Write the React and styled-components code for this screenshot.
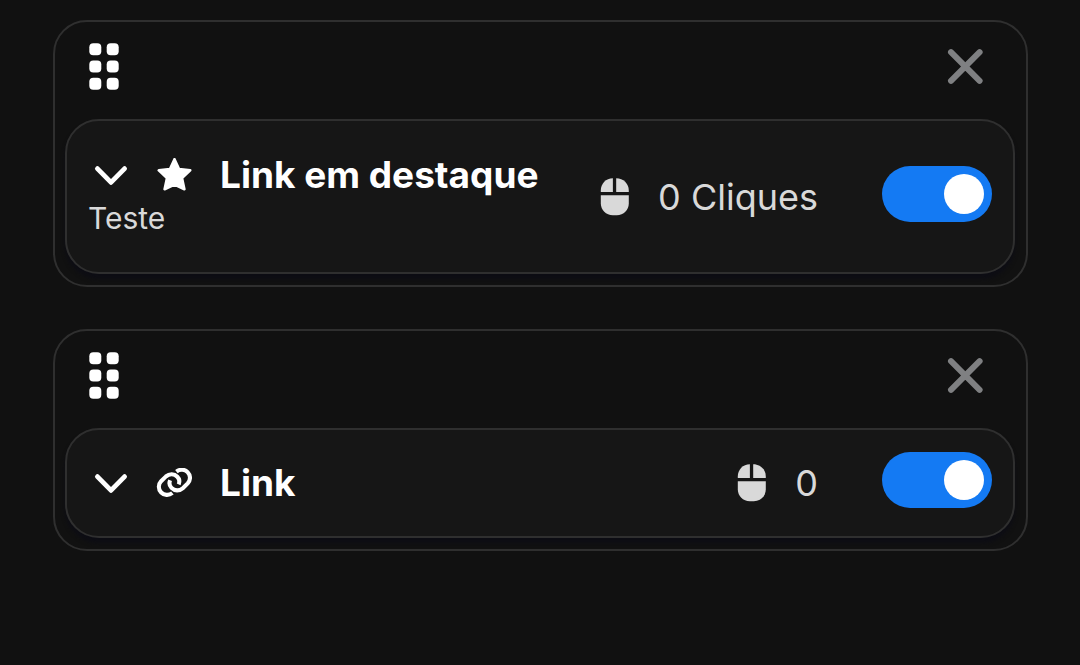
import { useState } from 'react'
import styled, { createGlobalStyle } from 'styled-components'

const GlobalStyle = createGlobalStyle`
  *,
  *::before,
  *::after {
    box-sizing: border-box;
  }

  body {
    margin: 0;
    background-color: #111111;
    color: #ffffff;
    font-family: Inter, 'Liberation Sans', sans-serif;
  }

  button {
    padding: 0;
    border: none;
    background: none;
    color: inherit;
    font: inherit;
    cursor: pointer;
  }
`

const List = styled.main`
  display: flex;
  flex-direction: column;
  gap: 42px;
  padding: 20px 52px 20px 53px;
`

const Card = styled.article`
  padding: 0 11px 11px 10px;
  border: 2px solid #2f2f2f;
  border-radius: 34px;
`

const CardHeader = styled.header`
  height: 97px;
  padding: 0 32px 8px 24px;
  display: flex;
  justify-content: space-between;
  align-items: center;
`

const IconButton = styled.button`
  display: flex;
  color: ${(props) => props.$color || '#ffffff'};
`

const Panel = styled.div`
  min-height: ${(props) => (props.$tall ? '155px' : '110px')};
  padding: 0 21px;
  display: flex;
  align-items: center;
  background-color: #161616;
  border: 2px solid #2f2f2f;
  border-radius: 34px;
  box-shadow: 0 5px 4px #0d0d14;
`

const Info = styled.div`
  flex: 1;
  padding-bottom: ${(props) => (props.$tall ? '2px' : '0')};
`

const TitleRow = styled.div`
  display: flex;
  align-items: center;
  padding-left: 6px;
`

const TypeIcon = styled.span`
  width: 36px;
  margin: 0 28px;
  display: flex;
  justify-content: center;
`

const Title = styled.h2`
  margin: 0;
  font-size: 37px;
  line-height: 44px;
  font-weight: 700;
`

const Description = styled.p`
  margin: 0;
  font-size: 30px;
  line-height: 42px;
  color: #d9d9d9;
`

const Clicks = styled.div`
  display: flex;
  align-items: center;
  gap: 28px;
  margin-right: 64px;
  font-size: 36px;
  line-height: 44px;
  color: #d9d9d9;
`

const Switch = styled.input`
  appearance: none;
  width: 110px;
  height: 56px;
  margin: 0 0 6px;
  padding: 8px;
  display: flex;
  align-items: center;
  border-radius: 28px;
  background-color: #3a3a3a;
  cursor: pointer;

  &::before {
    content: '';
    width: 40px;
    height: 40px;
    border-radius: 50%;
    background-color: #ffffff;
  }

  &:checked {
    justify-content: flex-end;
    background-color: #147af3;
  }
`

function GripIcon() {
  return (
    <svg width="30" height="47" viewBox="0 0 30 47" fill="currentColor">
      {[0.2, 17.5, 34.8].map((y) => (
        <g key={y}>
          <rect x="0.3" y={y} width="12" height="12" rx="4" />
          <rect x="17.7" y={y} width="12" height="12" rx="4" />
        </g>
      ))}
    </svg>
  )
}

function CloseIcon() {
  return (
    <svg
      width="36"
      height="36"
      viewBox="0 0 36 36"
      fill="none"
      stroke="currentColor"
      strokeWidth="6"
      strokeLinecap="round"
    >
      <path d="M4 3.2L32.6 31.8M32.6 3.2L4 31.8" />
    </svg>
  )
}

function ChevronIcon() {
  return (
    <svg
      width="34"
      height="24"
      viewBox="0 0 34 24"
      fill="none"
      stroke="currentColor"
      strokeWidth="4.8"
      strokeLinecap="round"
      strokeLinejoin="round"
    >
      <path d="M3.4 5.6L17 19.4L30.6 5.6" />
    </svg>
  )
}

function StarIcon() {
  return (
    <svg
      width="36"
      height="34"
      viewBox="0 0 36 34"
      fill="currentColor"
      stroke="currentColor"
      strokeWidth="2.6"
      strokeLinejoin="round"
    >
      <path d="M18.5 1.2L23 11L34.2 12.4L26 20L28.4 31.2L18.5 26.6L8.6 31.2L11 20L2.8 12.4L14 11Z" />
    </svg>
  )
}

function LinkIcon() {
  return (
    <svg
      width="36"
      height="30"
      viewBox="0 0 36 30"
      fill="none"
      stroke="currentColor"
      strokeWidth="4.1"
    >
      <path d="M16.4 25C12.8 27.8 8 27.4 5.2 24.5C2 21.2 2.1 16.4 5.1 13.2L10 8.4C13.4 5.4 18.2 5.5 21.3 8.7C23.3 10.8 23.8 13.8 22.7 16.4" />
      <path d="M20.4 3.6C24 0.8 28.8 1.2 31.6 4.1C34.8 7.4 34.7 12.2 31.7 15.4L26.8 20.2C23.4 23.2 18.6 23.1 15.5 19.9C13.5 17.8 13 14.8 14.1 12.2" />
    </svg>
  )
}

function MouseIcon() {
  return (
    <svg width="30" height="38" viewBox="0 0 30 38" fill="currentColor">
      <path d="M0.8 14V12.5C0.8 5.6 5.9 0.2 12.9 0.2V14Z" />
      <path d="M16.2 0.2C23.4 0.2 28.8 5.6 28.8 12.5V14H16.2Z" />
      <path d="M0.8 17.2H28.8V25.3C28.8 32.2 23.6 37.3 16.8 37.3H12.8C6 37.3 0.8 32.2 0.8 25.3Z" />
    </svg>
  )
}

function LinkCard({ title, description, icon, clicks, label }) {
  const [active, setActive] = useState(true)
  const tall = Boolean(description)

  return (
    <Card>
      <CardHeader>
        <IconButton type="button" aria-label="Mover">
          <GripIcon />
        </IconButton>
        <IconButton type="button" aria-label="Remover" $color="#7f8082">
          <CloseIcon />
        </IconButton>
      </CardHeader>
      <Panel $tall={tall}>
        <Info $tall={tall}>
          <TitleRow>
            <IconButton type="button" aria-label="Expandir">
              <ChevronIcon />
            </IconButton>
            <TypeIcon>{icon}</TypeIcon>
            <Title>{title}</Title>
          </TitleRow>
          {description && <Description>{description}</Description>}
        </Info>
        <Clicks>
          <MouseIcon />
          <span>
            {clicks}
            {label && ` ${label}`}
          </span>
        </Clicks>
        <Switch
          type="checkbox"
          aria-label={`Ativar ${title}`}
          checked={active}
          onChange={(e) => setActive(e.target.checked)}
        />
      </Panel>
    </Card>
  )
}

function App() {
  return (
    <>
      <GlobalStyle />
      <List>
        <LinkCard
          title="Link em destaque"
          description="Teste"
          icon={<StarIcon />}
          clicks={0}
          label="Cliques"
        />
        <LinkCard title="Link" icon={<LinkIcon />} clicks={0} />
      </List>
    </>
  )
}

export default App
